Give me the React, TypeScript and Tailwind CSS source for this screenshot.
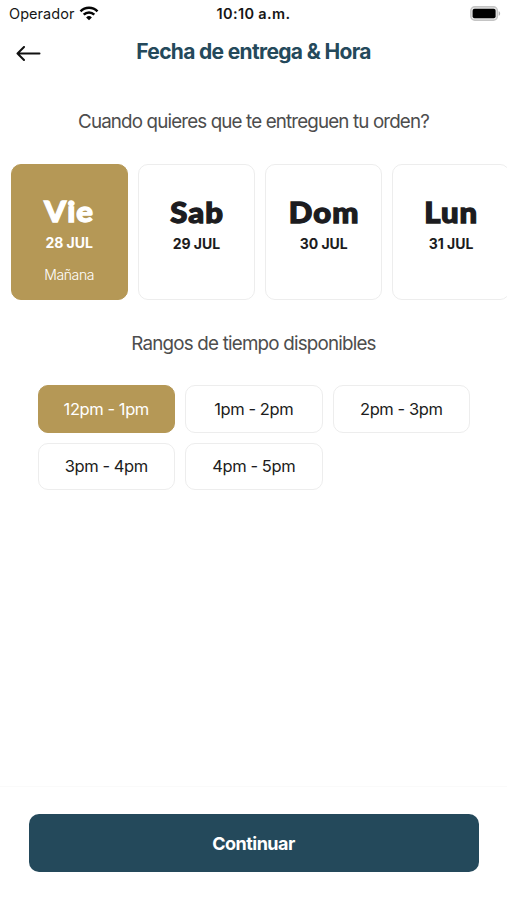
import { useState } from 'react';
import { clsx } from 'clsx';

type Day = { name: string; date: string; note?: string };

const DAYS: Day[] = [
  { name: 'Vie', date: '28 JUL', note: 'Mañana' },
  { name: 'Sab', date: '29 JUL' },
  { name: 'Dom', date: '30 JUL' },
  { name: 'Lun', date: '31 JUL' },
];

const SLOTS = ['12pm - 1pm', '1pm - 2pm', '2pm - 3pm', '3pm - 4pm', '4pm - 5pm'];

function WifiIcon() {
  return (
    <svg width="20" height="15" viewBox="0 0 20 15" fill="none" stroke="#050505" strokeWidth="2.5">
      <path d="M1.5 5.4a12 12 0 0 1 17 0" />
      <path d="M4.7 8.7a7.5 7.5 0 0 1 10.6 0" />
      <path d="M10 14.3 7.1 11.4a4.1 4.1 0 0 1 5.8 0Z" fill="#050505" stroke="none" />
    </svg>
  );
}

function BatteryIcon() {
  return (
    <svg width="31" height="15" viewBox="0 0 31 15">
      <rect x="0.8" y="0.8" width="26.6" height="13.4" rx="4" fill="#e4e4e4" stroke="#c4c4c4" strokeWidth="1.4" />
      <rect x="2.6" y="2.7" width="23" height="9.6" rx="2" fill="#000" />
      <path d="M28.7 5.2c1.9.7 1.9 3.9 0 4.6Z" fill="#b0b0b0" />
    </svg>
  );
}

function StatusBar() {
  return (
    <div className="grid h-7 grid-cols-3 items-center pr-[6px] pl-[9px] text-[14.5px] text-[#161616]">
      <div className="-mt-[2px] flex items-center gap-[5px]">
        <span className="mt-[2px] tracking-[0.05px]">Operador</span>
        <WifiIcon />
      </div>
      <span className="-ml-[3px] text-center font-semibold tracking-[0.35px]">10:10 a.m.</span>
      <div className="-mt-[2px] flex justify-end">
        <BatteryIcon />
      </div>
    </div>
  );
}

function Header() {
  return (
    <header className="grid h-[46px] grid-cols-[56px_1fr_56px] items-center">
      <button aria-label="Volver" className="mt-[5px] pl-4">
        <svg width="25" height="16" viewBox="0 0 25 16" fill="none" stroke="#111" strokeWidth="2" strokeLinecap="round" strokeLinejoin="round">
          <path d="M23.5 7.5H1.5M8 1 1.5 7.5 8 14" />
        </svg>
      </button>
      <h1 className="mt-[1px] text-center text-[21px] font-bold tracking-[-0.67px] whitespace-nowrap text-[#24495b]">
        Fecha de entrega &amp; Hora
      </h1>
    </header>
  );
}

export default function App() {
  const [day, setDay] = useState(0);
  const [slot, setSlot] = useState(0);

  return (
    <div className="flex h-[900px] w-[507px] flex-col overflow-hidden bg-white font-['Inter',sans-serif] text-[#1c1c20]">
      <StatusBar />
      <Header />

      <main className="flex-1">
        <p className="mt-[33px] text-center text-[18.8px] leading-[30px] tracking-[-0.86px] text-[#4d4d4d]">
          Cuando quieres que te entreguen tu orden?
        </p>

        <div className="mt-[26.5px] flex gap-[10px] overflow-hidden pl-[10.5px]">
          {DAYS.map((d, i) => (
            <button
              key={d.name}
              onClick={() => setDay(i)}
              className={clsx(
                'flex h-[136.5px] w-[117.3px] shrink-0 flex-col items-center rounded-[10px] border-[1.5px]',
                i === day ? 'border-[#b59856] bg-[#b59856] pt-[28px] text-white' : 'border-[#ededed] bg-white pt-[29px]',
              )}
            >
              <span className="-mr-[1px] scale-x-[1.07] font-['Lato',sans-serif] text-[29px] leading-9 font-black tracking-[1px] [-webkit-text-stroke:1.3px_currentColor]">
                {d.name}
              </span>
              <span className="mt-[4.5px] text-[14px] leading-5 font-bold tracking-[-0.05px]">{d.date}</span>
              {d.note && <span className="mt-3 text-[14px] leading-5 font-light tracking-[-0.4px]">{d.note}</span>}
            </button>
          ))}
        </div>

        <p className="mt-[28.5px] text-center text-[18.8px] leading-[30px] tracking-[-0.8px] text-[#4d4d4d]">
          Rangos de tiempo disponibles
        </p>

        <div className="mt-[26.5px] grid grid-cols-3 gap-[10px] pr-[37px] pl-[37.5px]">
          {SLOTS.map((label, i) => (
            <button
              key={label}
              onClick={() => setSlot(i)}
              className={clsx(
                'h-[47.5px] rounded-[10px] border-[1.5px] pt-px text-[16.5px] tracking-[-0.42px]',
                i === slot ? 'border-[#b59856] bg-[#b59856] text-white' : 'border-[#ededed] bg-white',
              )}
            >
              {label}
            </button>
          ))}
        </div>
      </main>

      <footer className="h-[114px] border-t border-[#fafafa] px-[28.5px] pt-[26.5px]">
        <button className="h-[58.5px] w-full rounded-[10px] bg-[#24495b] pt-px text-[18px] font-bold tracking-[-0.5px] text-white">
          Continuar
        </button>
      </footer>
    </div>
  );
}
